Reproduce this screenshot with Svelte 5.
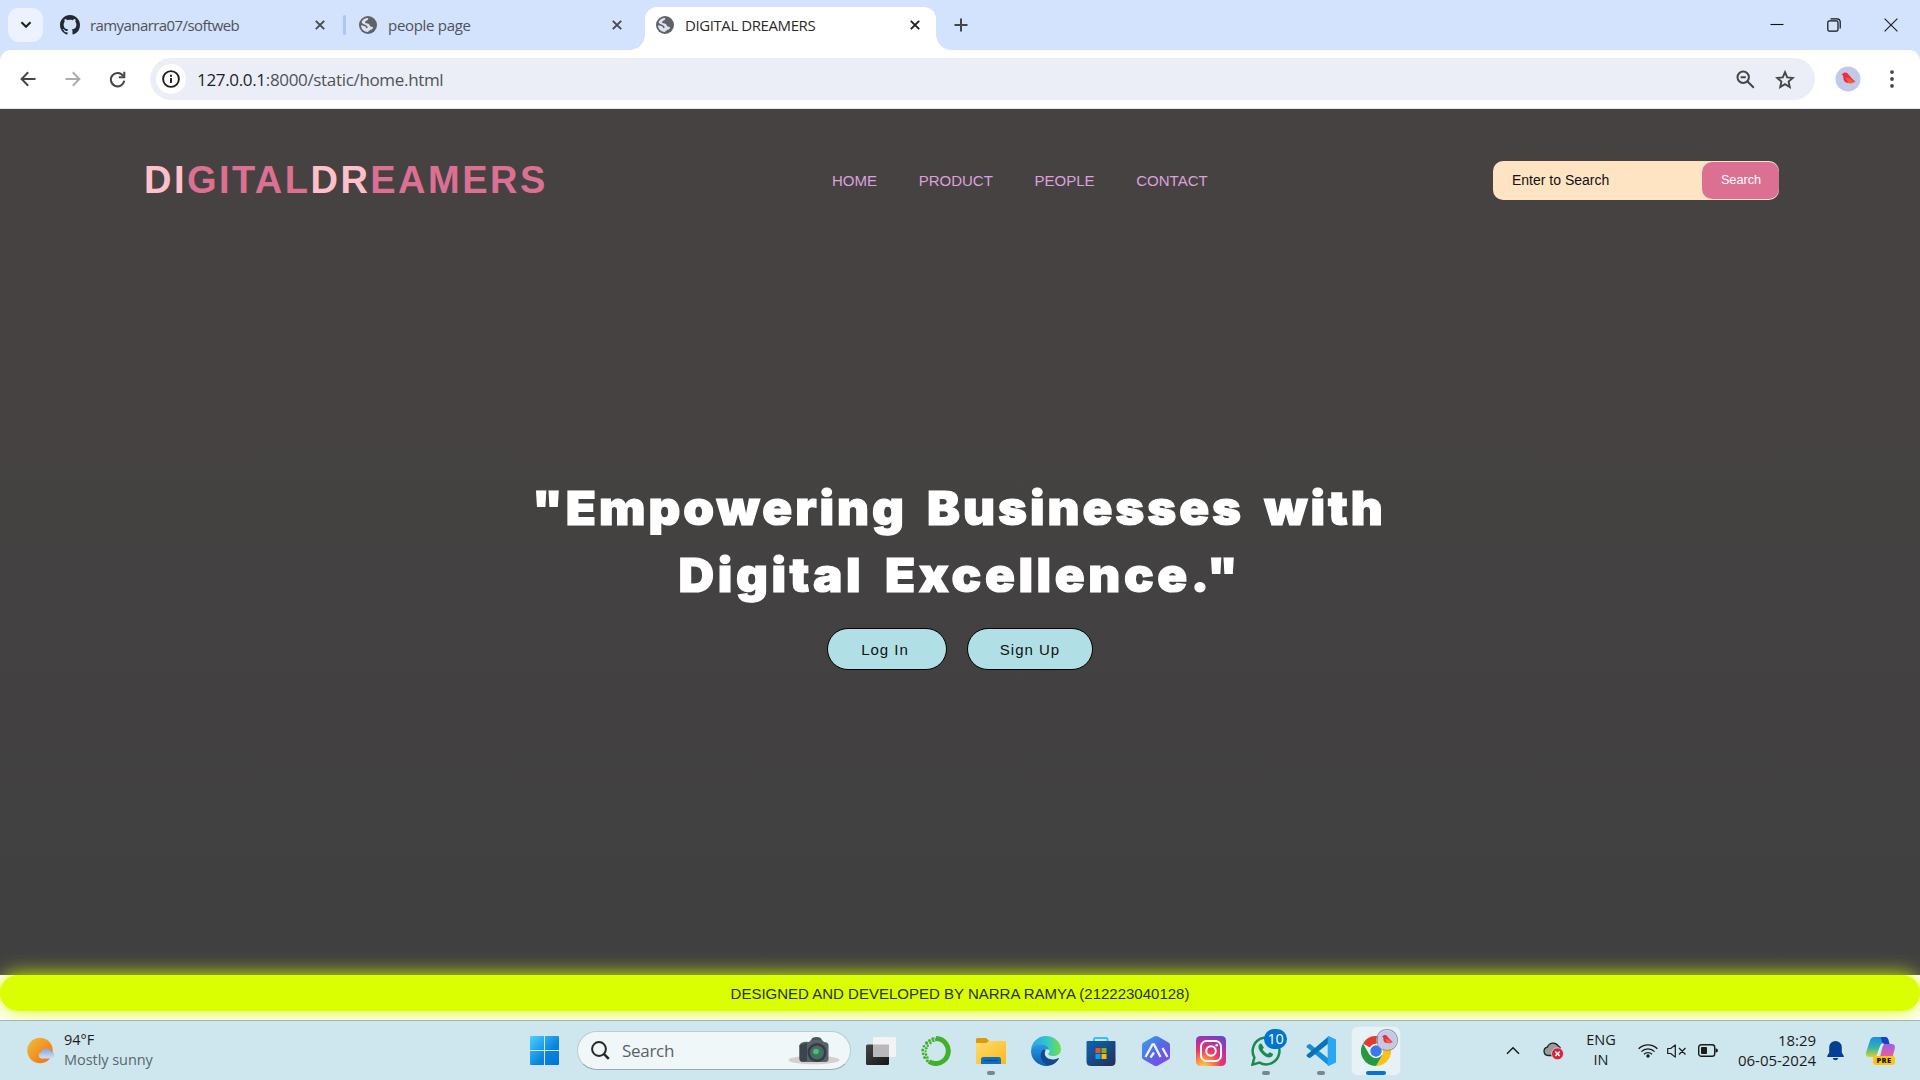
<script>
  const nav = ['HOME', 'PRODUCT', 'PEOPLE', 'CONTACT'];
</script>

{#snippet cross(k)}
  <svg class="cross {k}" width="10" height="10" viewBox="0 0 10 10"><path d="M.8.8 9.2 9.2M9.2.8.8 9.2" stroke="currentColor" stroke-width="1.9" fill="none" /></svg>
{/snippet}

{#snippet globe()}
  <svg class="ico" width="18" height="18" viewBox="0 0 18 18">
    <circle cx="9" cy="9" r="9" fill="#5f6368" />
    <path d="M9.600 2.100c-.9.600-.2 1.500-1.200 2.200-1 .6-2.200.6-2.300 1.900 0 1.100 1.200 1.100 2.300 1.200 1.600.1 2.100.9 2.300 2 .3 1.200 1.700 1 2.600 1.300 1 .4.800 1.600 0 2.200-1.200.8-2.300.8-3.300 1.900-.5.600-.7 1.100-1.200 1.200C5 16 2 13 2 9.300c1.500.3 3.200.3 4.300 1.200.8.700.5 1.700 1.600 1.800 1-.1.900-1.300.3-2.100C7 8.600 4.300 8.600 3 7 2.700 6.500 2.600 6.300 2.700 6 3.800 3.500 6.500 1.800 9.600 2.100z" fill="#dde4f0" />
  </svg>
{/snippet}

{#snippet bird()}
  <svg viewBox="0 0 26 26" width="100%" height="100%">
    <circle cx="13" cy="13" r="12.500" fill="#c3c8e6" />
    <path d="M6.500 8.500 9 6.800c2-1 3.700 0 4.500 1.600l3.800 4.300 3.200 3-2 .3-1.200 1.300-2.300-.7c-3 1-6-.7-6.500-3.400L8 9.500z" fill="#ee2b45" />
    <path d="m11 11 5 2 4 3-4 1.500c-2.500.3-4.500-2-5-6.500z" fill="#f4603c" />
  </svg>
{/snippet}

<div class="screen">
  <header class="tabs">
    <div class="drop"><svg width="12" height="8" viewBox="0 0 12 8"><path d="m1.500 1.300 4.500 4.500 4.500-4.500" fill="none" stroke="#1f1f1f" stroke-width="2.100" /></svg></div>
    <div class="tab one">
      <svg class="ico" width="20" height="20" viewBox="0 0 16 16"><path fill="#24292f" d="M8 0C3.580 0 0 3.580 0 8c0 3.540 2.290 6.530 5.470 7.590.4.070.55-.17.55-.38 0-.19-.01-.82-.01-1.490-2.010.37-2.530-.49-2.690-.94-.09-.23-.48-.94-.82-1.130-.28-.15-.68-.52-.01-.53.63-.01 1.080.58 1.230.82.72 1.210 1.870.87 2.330.66.070-.52.28-.87.51-1.070-1.780-.2-3.640-.89-3.640-3.950 0-.87.31-1.590.82-2.150-.08-.2-.36-1.020.08-2.120 0 0 .67-.21 2.200.82.64-.18 1.320-.27 2-.27s1.360.090 2 .27c1.530-1.040 2.200-.82 2.200-.82.44 1.100.16 1.920.08 2.120.51.56.82 1.270.82 2.150 0 3.070-1.870 3.750-3.650 3.950.29.25.54.73.54 1.480 0 1.070-.01 1.930-.01 2.200 0 .21.15.46.55.38A8.010 8.010 0 0 0 16 8c0-4.420-3.580-8-8-8z" /></svg>
      <span class="t1">ramyanarra07/softweb</span>
      {@render cross('dim')}
    </div>
    <i class="sep"></i>
    <div class="tab two">
      {@render globe()}
      <span class="t2">people page</span>
      {@render cross('dim')}
    </div>
    <div class="tab active">
      {@render globe()}
      <span class="t3">DIGITAL DREAMERS</span>
      {@render cross('dark')}
    </div>
    <svg class="plus" width="14" height="14" viewBox="0 0 14 14"><path d="M7 .5v13M.5 7h13" stroke="#444746" stroke-width="2" /></svg>
    <div class="win">
      <svg width="14" height="14" viewBox="0 0 14 14"><path d="M.5 6.500h13" stroke="#111" stroke-width="1.100" /></svg>
      <svg width="14" height="14" viewBox="0 0 14 14"><rect x=".8" y="2.900" width="10.200" height="10.200" rx="1.600" fill="none" stroke="#111" stroke-width="1.200" /><path d="M3.500.8H10a3.200 3.200 0 0 1 3.200 3.200v6.500" fill="none" stroke="#111" stroke-width="1.200" /></svg>
      <svg width="14" height="14" viewBox="0 0 14 14"><path d="m.6.6 12.800 12.800M13.400.6.600 13.400" stroke="#222" stroke-width="1.200" /></svg>
    </div>
  </header>

  <div class="toolbar">
    <div class="bar">
      <svg class="back" width="16" height="16" viewBox="0 0 16 16"><path d="M8.200 1.200 1.600 8l6.600 6.800M1.800 8H15.500" fill="none" stroke="#444746" stroke-width="2" /></svg>
      <svg class="fwd" width="16" height="16" viewBox="0 0 16 16"><path d="M7.800 1.200 14.400 8l-6.600 6.800M14.200 8H.5" fill="none" stroke="#aaacad" stroke-width="2" /></svg>
      <svg class="reload" width="17" height="17" viewBox="0 0 17 17"><path d="M14.200 5A6.700 6.700 0 1 0 15.200 9.600" fill="none" stroke="#444746" stroke-width="2" /><path d="M15.300.8v5.500H9.800" fill="none" stroke="#444746" stroke-width="2" /></svg>
      <div class="omni">
        <div class="info"><svg width="18" height="18" viewBox="0 0 18 18"><circle cx="9" cy="9" r="7.900" fill="none" stroke="#1f1f1f" stroke-width="1.900" /><path d="M9 8v5M9 4.700v2" stroke="#1f1f1f" stroke-width="1.900" /></svg></div>
        <div class="url"><b>127.0.0.1</b>:8000/static/home.html</div>
        <svg class="zoomi" width="19" height="19" viewBox="0 0 19 19"><circle cx="7.200" cy="7.200" r="5.700" fill="none" stroke="#444746" stroke-width="2" /><path d="m11.300 11.300 6.500 6.500M4.600 7.200h5.200" stroke="#444746" stroke-width="2" /></svg>
        <svg class="star" width="20" height="19" viewBox="0 0 20 19"><path d="m10 2.200 2.200 5.200 5.600.5-4.200 3.700 1.200 5.500-4.800-2.900-4.800 2.900 1.200-5.500L2.200 7.900l5.600-.5z" fill="none" stroke="#444746" stroke-width="1.900" /></svg>
      </div>
      <div class="avatar">{@render bird()}</div>
      <svg class="dots" width="4" height="18" viewBox="0 0 4 18"><g fill="#444746"><circle cx="2" cy="2.100" r="1.900" /><circle cx="2" cy="9" r="1.900" /><circle cx="2" cy="15.900" r="1.900" /></g></svg>
    </div>
  </div>

  <main>
    <div class="top">
      <h2><span>DI</span>GITAL<span>DR</span>EAMERS</h2>
      <nav>{#each nav as n}<a href="#{n}">{n}</a>{/each}</nav>
      <div class="search"><span>Enter to Search</span><button>Search</button></div>
    </div>
    <h1><span class="l1">"Empowering Businesses with</span><span class="l2">Digital Excellence."</span></h1>
    <div class="btns"><button class="in">Log In</button><button class="up">Sign Up</button></div>
  </main>

  <div class="foot"><footer><span>DESIGNED AND DEVELOPED BY NARRA RAMYA (212223040128)</span></footer></div>

  <div class="task">
    <div class="weather">
      <svg width="30" height="28" viewBox="0 0 30 28">
        <defs>
          <linearGradient id="sun" x1="0" y1="0" x2="1" y2="1"><stop offset="0" stop-color="#efbf3a" /><stop offset="1" stop-color="#f26a10" /></linearGradient>
          <linearGradient id="cl" x1="0" y1="0" x2="0" y2="1"><stop offset="0" stop-color="#7ea4e6" /><stop offset="1" stop-color="#cfe0fb" /></linearGradient>
        </defs>
        <circle cx="13" cy="13.500" r="12.700" fill="url(#sun)" />
        <path d="M14.500 21.500a3.300 3.300 0 0 1 0-6.500 5 5 0 0 1 9.500-.3 3.500 3.500 0 0 1 1 6.800z" fill="url(#cl)" />
      </svg>
      <div class="wt"><span>94°F</span><em>Mostly sunny</em></div>
    </div>
    <div class="apps">
      <svg class="start" width="29" height="29" viewBox="0 0 29 29">
        <defs><linearGradient id="w" x1="0" y1="0" x2="1" y2="1"><stop offset="0" stop-color="#4cd0ff" /><stop offset=".6" stop-color="#0b84de" /><stop offset="1" stop-color="#0074d4" /></linearGradient></defs>
        <path d="M1 0h13v14H0V1a1 1 0 0 1 1-1zM15 0h13a1 1 0 0 1 1 1v13H15zM0 15h14v14H1a1 1 0 0 1-1-1zM15 15h14v13a1 1 0 0 1-1 1H15z" fill="url(#w)" />
      </svg>
      <div class="pill">
        <svg class="mag" width="19" height="19" viewBox="0 0 19 19"><circle cx="8" cy="8" r="6.900" fill="none" stroke="#262626" stroke-width="2" /><path d="m12.800 12.800 5 5" stroke="#262626" stroke-width="2.600" /></svg>
        <span>Search</span>
        <svg class="cam" width="52" height="28" viewBox="0 0 52 28">
          <ellipse cx="26" cy="23" rx="25.500" ry="4.300" fill="#d5cfd0" />
          <path d="M23 4q0-4 5.500-4T34 4l2 2H21z" fill="#4b5661" />
          <path d="M13 6q4-2 8-1l2-2h11l2 2q4 0 4.500 3v14q0 3-3 3H15q-3.500 0-3.500-3V8z" fill="#57626d" />
          <path d="M11.500 8 19 6v18l-5 .5q-2.500 0-2.500-3z" fill="#3c454e" />
          <circle cx="29" cy="15.500" r="9.500" fill="#343c44" /><circle cx="29" cy="15.500" r="7" fill="#56626c" /><circle cx="29" cy="15.500" r="5.200" fill="#2e7e55" /><circle cx="28" cy="14.500" r="2.800" fill="#58b77f" />
        </svg>
      </div>
      <div class="app a1"><svg width="30" height="30" viewBox="0 0 30 30">
        <defs><linearGradient id="tv" x1="0" y1="0" x2="1" y2="1"><stop offset="0" stop-color="#454545" /><stop offset="1" stop-color="#161616" /></linearGradient></defs>
        <rect x="0" y="8.500" width="23" height="20.500" rx="1.500" fill="url(#tv)" /><rect x="7" y="1" width="23" height="20" rx="1.500" fill="#f3f3f3" /><path d="M7 8.500h16V21H8.500A1.500 1.500 0 0 1 7 19.500z" fill="#b9b9b9" />
      </svg></div>
      <div class="app"><svg width="30" height="30" viewBox="0 0 30 30">
        <path d="M15 2.500a12.500 12.500 0 1 1-7 23" fill="none" stroke="#43b02a" stroke-width="5" />
        <g fill="#43b02a"><circle cx="12.500" cy="3.500" r="2.500" /><circle cx="8.500" cy="4.500" r="1.500" /><circle cx="9.500" cy="7" r="1.200" /><circle cx="5.600" cy="7" r="1.700" /><circle cx="6.800" cy="9.700" r="1.200" /><circle cx="3" cy="10.200" r="1.300" /><circle cx="5.200" cy="12.300" r="1.300" /><circle cx="1.700" cy="14" r="1.500" /><circle cx="4.600" cy="15.300" r="1.100" /><circle cx="2.200" cy="17.800" r="1.400" /><circle cx="5" cy="18.600" r="1.300" /><circle cx="3.600" cy="21.500" r="1.500" /><circle cx="6.500" cy="21.800" r="1.500" /><circle cx="6.300" cy="24.700" r="1.600" /></g>
        <path d="m9 1.500 2.200 4M12.800.5l.8 4.500M5 24l4-3" stroke="#cee6ed" stroke-width=".8" />
      </svg></div>
      <div class="app run"><svg width="30" height="30" viewBox="0 0 30 30">
        <defs><linearGradient id="fo" x1="0" y1="0" x2="1" y2="1"><stop offset="0" stop-color="#ffdc6b" /><stop offset="1" stop-color="#f9b91c" /></linearGradient></defs>
        <path d="M0 3.500Q0 2 1.500 2H9q1.500 0 2.500 1.300L13 5v6H0z" fill="#d99a0b" /><path d="M0 7h10l3-2h17v23H1q-1 0-1-1z" fill="url(#fo)" /><path d="M5 28v-4.500Q5 21 7.500 21h15q2.500 0 2.500 2.500V28z" fill="#0f6fc0" /><path d="M8.500 24.500h13" stroke="#0a4f91" stroke-width="1.300" stroke-linecap="round" />
      </svg></div>
      <div class="app"><svg width="30" height="30" viewBox="0 0 24 24">
        <defs>
          <linearGradient id="e1" x1="0" y1="0" x2="1" y2="0"><stop offset="0" stop-color="#2aa8e0" /><stop offset=".5" stop-color="#30c4cf" /><stop offset="1" stop-color="#6fe04b" /></linearGradient>
          <linearGradient id="e2" x1="0" y1="0" x2="0" y2="1"><stop offset="0" stop-color="#2a9ce4" /><stop offset="1" stop-color="#0c5cb4" /></linearGradient>
        </defs>
        <path d="M0 11.500C.4 5 5.500 0 12 0s12 4.800 12 10.500c0 3.200-2.500 5.500-6 5.500-3.300 0-4.600-1.200-4-2 .8-1 .9-1.500.8-2.500C14.500 9 12 7 8 7 4 7 1 9 0 11.500z" fill="url(#e1)" />
        <path d="M0 12C.5 9 3.500 6.500 7.500 6.500c3.500 0 6.500 1.700 7.200 4.500-4.500-1.500-6.500 1-6.200 4 .3 4 3 7.500 6.500 8.700C7.500 25.200 0 20 0 12z" fill="url(#e2)" />
        <path d="M9.800 10.800c-2.500 2-2.800 6.200-.6 9.200 2.300 3 5.400 4.200 7.300 3.200 2.500-1 4.500-2.800 5.800-5 .2-.4-.2-.7-.6-.5-5 2.300-9.700.4-10.500-2.700-.4-1.500 0-3 .8-4z" fill="#124a8f" />
      </svg></div>
      <div class="app"><svg width="30" height="30" viewBox="0 0 30 30">
        <defs><linearGradient id="st" x1="0" y1="0" x2="1" y2="1"><stop offset="0" stop-color="#0e65b5" /><stop offset="1" stop-color="#222e57" /></linearGradient></defs>
        <path d="M8 6V3.500Q8 2 9.500 2h10.500Q21.500 2 21.500 3.500V6" fill="none" stroke="#35c1f1" stroke-width="2" /><path d="M.5 6q0-1 1-1h27q1 0 1 1v19.500q0 4.500-4.500 4.500H5Q.5 30 .5 25.500z" fill="url(#st)" /><path d="M9.500 12h5v5h-5z" fill="#f25022" /><path d="M15.500 12h5v5h-5z" fill="#7fba00" /><path d="M9.500 18h5v5h-5z" fill="#00a4ef" /><path d="M15.500 18h5v5h-5z" fill="#ffb900" />
      </svg></div>
      <div class="app"><svg width="30" height="30" viewBox="0 0 30 30">
        <defs><linearGradient id="as" x1="0" y1="0" x2="1" y2="1"><stop offset="0" stop-color="#35a5ec" /><stop offset=".5" stop-color="#5668e6" /><stop offset="1" stop-color="#8a3df0" /></linearGradient></defs>
        <path d="M15 0q1 0 2 .6l10.500 6q1.500.9 1.500 2.500v11.800q0 1.600-1.500 2.500L17 29.400q-2 1.200-4 0l-10.500-6Q1 22.500 1 20.900V9.100q0-1.600 1.500-2.500L13 .6Q14 0 15 0z" fill="url(#as)" /><path d="m4.500 21 7-12.500h1.500l6.500 12.500M9.500 21.500l3.500-5M21.500 12l5 9" fill="none" stroke="#f0f3ff" stroke-width="2.300" />
      </svg></div>
      <div class="app"><svg width="30" height="30" viewBox="0 0 30 30">
        <defs><radialGradient id="ig" cx=".25" cy="1.050" r="1.200"><stop offset="0" stop-color="#ffd35c" /><stop offset=".25" stop-color="#fd8a3e" /><stop offset=".5" stop-color="#ea3568" /><stop offset=".75" stop-color="#b42fa6" /><stop offset="1" stop-color="#6247cf" /></radialGradient></defs>
        <rect width="30" height="30" rx="4.500" fill="url(#ig)" /><rect x="5" y="5" width="20" height="20" rx="5.500" fill="none" stroke="#fff" stroke-width="2" /><circle cx="15" cy="15" r="4.800" fill="none" stroke="#fff" stroke-width="2" /><circle cx="20.700" cy="9.300" r="1.300" fill="#fff" />
      </svg></div>
      <div class="app run">
        <svg width="30" height="30" viewBox="0 0 24 24"><path d="M1.200 22.900 2.700 17.200A10.700 10.700 0 1 1 6.800 21.300z" fill="none" stroke="#1c8a50" stroke-width="2" /><path d="M8.700 6.500c-.4-.8-1.300-.7-1.800-.1-2.100 2.400-.4 5.300 2 7.700 2.600 2.600 5.500 4 7.800 2.200 1-.8 1-1.700.8-2.100l-2.600-1.300-1.400 1.500c-1.900-.6-3.500-2.200-4.200-3.800l1-1.300z" fill="#1c8a50" /></svg>
        <span class="badge">10</span>
      </div>
      <div class="app run"><svg width="30" height="30" viewBox="0 0 30 30">
        <path d="m1 9.500 2-1.400 1.500.2L23 23v7L.8 11.200Q0 10.400 1 9.500z" fill="#1590d8" /><path d="m1 20.500 2 1.400 1.500-.2L23 7V0L.8 18.800Q0 19.600 1 20.500z" fill="#0a72b8" /><path d="M22.500 0 30 3.500v23L22.500 30q-.8 0-.8-1V1q0-1 .8-1z" fill="#2aa7f2" />
      </svg></div>
      <div class="app tile run">
        <svg width="30" height="30" viewBox="0 0 30 30"><path d="M15 15 2 7.500A15 15 0 0 1 28 7.500H15z" fill="#e33b2e" /><path d="M15 7.500h13A15 15 0 0 1 15 30l6.500-11.300z" fill="#fbc116" /><path d="M2 7.500A15 15 0 0 0 15 30l6.500-11.300L15 15 8.500 18.700z" fill="#249a41" /><circle cx="15" cy="15" r="7.200" fill="#fff" /><circle cx="15" cy="15" r="5.700" fill="#3b78e7" /></svg>
        <span class="mini">{@render bird()}</span>
      </div>
    </div>
    <div class="tray">
      <svg class="up2" width="14" height="9" viewBox="0 0 14 9"><path d="m1 7.700 6-6 6 6" fill="none" stroke="#1b1b1b" stroke-width="1.500" /></svg>
      <svg class="od" width="21" height="18" viewBox="0 0 21 18"><path d="M5 13.500a4.200 4.200 0 0 1-.6-8.300 6 6 0 0 1 10.800-1.300 4 4 0 0 1 2.300 4v5.600z" fill="#9b9b9b" stroke="#222" stroke-width="1.300" /><circle cx="14.500" cy="11.800" r="6" fill="#dd2135" stroke="#cee6ed" stroke-width=".8" /><path d="m12.300 9.600 4.400 4.400m0-4.400-4.400 4.400" stroke="#fff" stroke-width="1.500" /></svg>
      <div class="lang"><span>ENG</span><span>IN</span></div>
      <svg class="wifi" width="20" height="15" viewBox="0 0 20 15"><g fill="none" stroke="#1b1b1b" stroke-width="1.300"><path d="M.6 5.800a13 13 0 0 1 18.800 0M3.400 8.600a9.200 9.200 0 0 1 13.200 0M6 11.300a5.600 5.600 0 0 1 8 0" /></g><circle cx="10" cy="13" r="1.700" fill="#1b1b1b" /></svg>
      <svg class="vol" width="20" height="14" viewBox="0 0 20 14"><path d="M.7 4.500h3L8.300.9v12.200L3.700 9.500h-3zM12 4l6.500 6.500M18.500 4 12 10.500" fill="none" stroke="#1b1b1b" stroke-width="1.200" stroke-linejoin="round" /></svg>
      <svg class="bat" width="20" height="13" viewBox="0 0 20 13"><rect x=".7" y=".7" width="16" height="11.600" rx="2.600" fill="none" stroke="#1b1b1b" stroke-width="1.400" /><rect x="3" y="3" width="6" height="7" rx=".8" fill="#1b1b1b" /><path d="M17.500 4.200q2.500.4 2.500 2.300t-2.500 2.300z" fill="#1b1b1b" /></svg>
      <div class="clock"><span>18:29</span><span>06-05-2024</span></div>
      <svg class="bell" width="17" height="20" viewBox="0 0 17 20"><path d="M8.500 0a6.300 6.300 0 0 1 6.300 6.300v5.200l2 3.500q.3 1-.8 1H1q-1.100 0-.8-1l2-3.500V6.300A6.300 6.300 0 0 1 8.500 0zM5.700 17h5.600q-.5 2.200-2.800 2.200T5.700 17z" fill="#053f93" /></svg>
      <div class="pilot">
        <svg width="29" height="24" viewBox="0 0 29 24">
          <defs>
            <linearGradient id="p1" x1="0" y1="0" x2="0" y2="1"><stop offset="0" stop-color="#1b8de8" /><stop offset=".5" stop-color="#2fb2b0" /><stop offset="1" stop-color="#d2d629" /></linearGradient>
            <linearGradient id="p2" x1="0" y1="0" x2="0" y2="1"><stop offset="0" stop-color="#a05be9" /><stop offset="1" stop-color="#f8627d" /></linearGradient>
          </defs>
          <path d="M8 0h11q2.500 0 3.500 3l1 4h-6q-2 0-3 3l-3 8q-.8 2-3 2H3q-4 0-2.800-5L4 3.500Q5 0 8 0z" fill="url(#p1)" />
          <path d="M15 0h4q2.500 0 3.500 3l1 4h-5q-3 0-3.500-7z" fill="#1743c8" />
          <path d="M18 7h7.500q4 0 3.300 4.500l-2 7.500q-1 3-4 3H11q2.500-.5 3.300-3l2-8q.6-2.500 1.700-4z" fill="url(#p2)" />
          <path d="M17.500 7q-2 0-3 3l-2.800 8q-.8 2-2.700 2" fill="none" stroke="#e6f1f6" stroke-width="1.600" />
        </svg>
        <span class="pre">PRE</span>
      </div>
    </div>
  </div>
</div>

<style>
  :global(body) { margin: 0; }
  .screen { width: 1920px; height: 1080px; overflow: hidden; display: flex; flex-direction: column; background: #fff; font-family: "Open Sans", "Noto Sans", sans-serif; }
  svg { display: block; flex: none; }
  span, b, em { font-style: normal; font-weight: inherit; white-space: nowrap; }

  .tabs { height: 50px; background: #d3e2fd; display: flex; align-items: center; box-sizing: border-box; flex: none; color: #505356; font-size: 15px; }
  .drop { width: 35px; height: 34px; margin-left: 8px; border-radius: 11px; background: #ecf2fe; display: grid; place-items: center; }
  .tab { display: flex; align-items: center; height: 100%; box-sizing: border-box; }
  .tab span { flex: 1; margin-left: 10px; line-height: 20px; }
  .one { width: 265px; margin-left: 17px; }
  .t1 { letter-spacing: -.58px; }
  .sep { width: 3px; height: 20px; background: #a8c7fa; border-radius: 2px; margin-left: 18px; }
  .two { width: 263px; margin-left: 13px; }
  .tab .t2 { margin-left: 11px; letter-spacing: -.3px; }
  .active { width: 291px; height: 43px; margin: 7px 0 0 23px; padding: 0 16px 8px 11px; background: #fff; border-radius: 12px 12px 0 0; position: relative; color: #2b2b2b; }
  .active::before, .active::after { content: ''; position: absolute; bottom: 0; width: 15px; height: 15px; }
  .active::before { left: -15px; background: radial-gradient(circle at 0 0, #d3e2fd 14.500px, #fff 15px); }
  .active::after { right: -15px; background: radial-gradient(circle at 100% 0, #d3e2fd 14.500px, #fff 15px); }
  .tab .t3 { margin-left: 11px; letter-spacing: -.42px; }
  .dim { color: #474a4d; }
  .dark { color: #1f1f1f; }
  .plus { margin-left: 18px; }
  .win { margin-left: auto; margin-right: 22px; display: flex; gap: 43px; }

  .toolbar { height: 59px; flex: none; background: #d3e2fd; }
  .bar { height: 100%; box-sizing: border-box; background: #fff; border-radius: 11px 11px 0 0; border-bottom: 1px solid #dfe3ea; display: flex; align-items: center; }
  .back { margin-left: 20px; }
  .fwd { margin-left: 29px; }
  .reload { margin-left: 28px; }
  .omni { margin-left: 24px; width: 1665px; height: 42px; border-radius: 21px; background: #ebeef7; display: flex; align-items: center; }
  .info { width: 30px; height: 30px; border-radius: 50%; background: #fff; margin-left: 6px; display: grid; place-items: center; }
  .url { margin: 1px 0 0 11px; flex: 1; font-size: 17px; color: #505356; letter-spacing: -.33px; line-height: 24px; }
  .url b { color: #1f1f1f; }
  .zoomi { margin-right: 20px; }
  .star { margin-right: 20px; }
  .avatar { width: 26px; height: 26px; margin-left: 20px; }
  .dots { margin-left: 29px; }

  main { height: 866px; flex: none; background: linear-gradient(#474242, #444240 48%, #434142 52%, #414041); display: flex; flex-direction: column; align-items: center; font-family: "Liberation Sans", Arial, sans-serif; font-weight: 400; }
  .top { width: 1636px; height: 39px; margin-top: 52px; padding-left: 2px; display: flex; align-items: center; }
  h2 { margin: 0 0 0 1px; width: 688px; font-size: 38px; line-height: 39px; letter-spacing: 2.470px; color: #db7093; font-weight: 700; white-space: nowrap; }
  h2 span { color: #ffc0cb; }
  nav { display: flex; gap: 41.700px; width: 661px; }
  nav a { color: #dda0dd; text-decoration: none; font-size: 15px; line-height: 20px; }
  .search { width: 286px; height: 39px; background: #ffe4c4; border-radius: 10px; display: flex; align-items: center; justify-content: space-between; font-size: 14px; color: #111; }
  .search span { margin-left: 19px; padding-bottom: 1px; }
  button { font-family: inherit; margin: 0; padding: 0; }
  .search button { width: 77px; height: 37px; border: 0; border-radius: 10px; background: #db7093; color: #fff; font-size: 12.700px; padding: 0 0 2px 1px; }
  h1 { margin: 274px 0 0; width: 900px; display: flex; flex-direction: column; align-items: center; font-family: Inter, "Liberation Sans", sans-serif; font-size: 47px; font-weight: 900; line-height: 67px; letter-spacing: 2.800px; word-spacing: 7px; color: #fff; -webkit-text-stroke: 1.200px #fff; transform: scaleX(1.05); }
  .l1 { margin-right: 2px; }
  .l2 { letter-spacing: 3.400px; }
  .btns { display: flex; gap: 20px; margin-top: 20px; }
  .btns button { height: 42px; border: 1px solid #000; border-radius: 21px; background: #b0e0e6; color: #111; font-size: 15px; letter-spacing: 1px; }
  .btns .in { width: 120px; padding-right: 4px; }
  .up { width: 126px; }

  .foot { height: 45px; flex: none; background: #fff; }
  footer { position: relative; height: 36px; border-radius: 18px; background: #d9ff00; box-shadow: 0 0 20px #d9ff00; display: flex; align-items: center; justify-content: center; font: 15px "Liberation Sans", Arial, sans-serif; color: #2b2f1b; }

  .task { position: relative; height: 60px; flex: none; box-sizing: border-box; border-top: 1px solid #a5b4ba; background: #cee6ed; display: flex; align-items: center; color: #1b1b1b; font-size: 14.500px; }
  .weather { width: 503px; margin-left: 27px; display: flex; align-items: center; }
  .wt { margin: -2px 0 0 7px; display: flex; flex-direction: column; line-height: 20px; letter-spacing: -.05px; }
  .wt em { color: #59686d; }
  .apps { display: flex; align-items: center; }
  .pill { margin-left: 18px; width: 274px; height: 39px; box-sizing: border-box; border: 1px solid #b9cdd4; border-bottom-color: #98a9b0; border-radius: 20px; background: #f0f7f9; display: flex; align-items: center; }
  .mag { margin-left: 13px; }
  .pill span { margin-left: 12px; flex: 1; font-size: 17px; color: #5b6164; letter-spacing: -.3px; }
  .cam { margin-right: 10px; }
  .app { position: relative; width: 48px; height: 48px; margin-left: 7px; display: grid; place-items: center; border-radius: 6px; box-sizing: border-box; }
  .a1 { margin-left: 6px; }
  .run::after { content: ''; position: absolute; left: 20px; bottom: 0; width: 8px; height: 4px; border-radius: 2px; background: #79868b; }
  .tile { background: #e7f2f7; box-shadow: 0 0 0 1px #dbe9ee; }
  .tile::after { left: 14px; width: 20px; background: #0075d5; }
  .badge { position: absolute; left: 22px; top: 2px; width: 23px; height: 20px; border-radius: 10px; background: #0074d0; color: #fff; font-size: 14.500px; line-height: 20px; text-align: center; letter-spacing: -.4px; }
  .mini { position: absolute; left: 25px; top: 3px; width: 20px; height: 20px; border-radius: 50%; box-shadow: 0 0 0 1px #8f98ad; }
  .tray { margin-left: 106px; display: flex; align-items: center; line-height: 20px; }
  .od { margin-left: 23px; }
  .lang { width: 40px; margin: -2px 0 0 17px; display: flex; flex-direction: column; align-items: center; }
  .wifi { margin-left: 17px; }
  .vol { margin-left: 9px; }
  .bat { margin-left: 11px; }
  .clock { width: 98px; margin-top: -2px; display: flex; flex-direction: column; align-items: flex-end; font-size: 15px; letter-spacing: -.03px; }
  .bell { margin-left: 11px; }
  .pilot { position: relative; margin-left: 22px; height: 28px; }
  .pre { position: absolute; left: 7px; bottom: 0; width: 22px; height: 9px; border-radius: 3px; background: #fec60b; color: #161616; font-size: 7.500px; line-height: 9px; font-weight: 800; text-align: center; letter-spacing: .4px; }
</style>
